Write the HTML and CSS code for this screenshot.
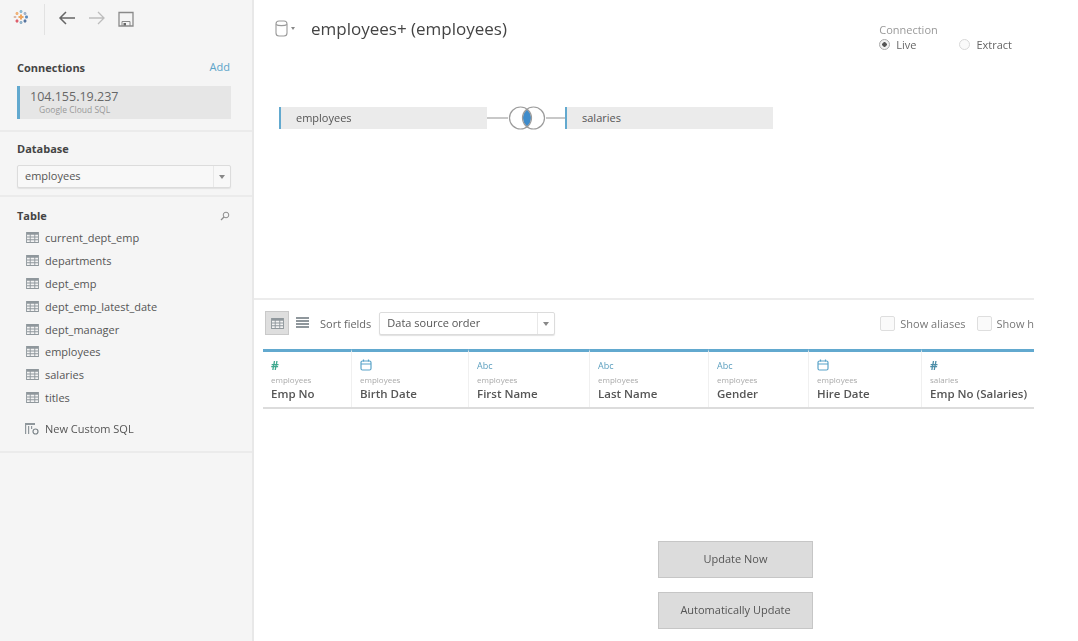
FILE: index.html
```html
<!DOCTYPE html>
<html lang="en">
<head>
  <meta charset="UTF-8" />
  <title>employees+ (employees)</title>
  <link rel="stylesheet" href="styles.css">
</head>
<body>
  <svg width="0" height="0" class="defs">
    <symbol id="table" viewBox="0 0 14 12">
      <path d="M0 0H14V12H0Z" fill="#8f979c"/>
      <path d="M1 3H4V5H1ZM5 3H9V5H5ZM10 3H13V5H10ZM1 6H4V8H1ZM5 6H9V8H5ZM10 6H13V8H10ZM1 9H4V11H1ZM5 9H9V11H5ZM10 9H13V11H10Z" fill="#f3f3f3"/>
    </symbol>
    <symbol id="calendar" viewBox="0 0 12 12">
      <rect x="1" y="2" width="10" height="9" rx="1.5" fill="none" stroke="currentColor" stroke-width="1.2"/>
      <path d="M1 5H11M3.500 .5V2.500M8.500 .5V2.500" stroke="currentColor" stroke-width="1.200"/>
    </symbol>
  </svg>

  <aside class="sidebar">
    <div class="topbar">
      <svg class="logo" width="16" height="16" viewBox="0 0 16 16">
        <path d="M7 1H9V4H7ZM6.500 1.800H9.500V3.200H6.500Z" fill="#8fbdd4"/>
        <path d="M3 3H5V6H3ZM2.500 3.800H5.500V5.200H2.500Z" fill="#f0b47c"/>
        <path d="M11 3H13V6H11ZM10.500 3.800H13.500V5.200H10.500Z" fill="#a3b5cc"/>
        <path d="M7 5.500H9V10.500H7ZM5.500 7H10.500V9H5.500Z" fill="#f0a65e"/>
        <path d="M1 7H3V9H1ZM0.500 7.500H3.500V8.500H0.500Z" fill="#d9b8a8"/>
        <path d="M12.500 6.500H14.500V9.500H12.500ZM12 7.300H15V8.700H12Z" fill="#5b8cbf"/>
        <path d="M3 10.500H5V13.500H3ZM2.500 11.300H5.500V12.700H2.500Z" fill="#de5f6b"/>
        <path d="M11 10.500H13V13.500H11ZM10.500 11.300H13.500V12.700H10.500Z" fill="#56749f"/>
        <path d="M7 12H9V15H7ZM6.500 12.800H9.500V14.200H6.500Z" fill="#94b5cb"/>
      </svg>
      <span class="topbar-sep"></span>
      <svg width="18" height="14" viewBox="0 0 18 14" class="nav-icon">
        <path d="M17 7H2M8 1L2 7L8 13" fill="none" stroke="#666" stroke-width="1.500"/>
      </svg>
      <svg width="18" height="14" viewBox="0 0 18 14" class="nav-icon">
        <path d="M1 7H16M10 1L16 7L10 13" fill="none" stroke="#bdbdbd" stroke-width="1.300"/>
      </svg>
      <svg width="16" height="16" viewBox="0 0 16 16" class="nav-icon">
        <path d="M1 1.500H15V15H1Z" fill="none" stroke="#8a8a8a" stroke-width="1.300"/>
        <path d="M4 15V10.500H12V15" fill="none" stroke="#8a8a8a"/>
        <rect x="5.500" y="12" width="2.500" height="2.500" fill="#666"/>
      </svg>
    </div>

    <section class="side-section connections">
      <div class="side-head">
        <h2>Connections</h2>
        <a class="add-link">Add</a>
      </div>
      <div class="conn-item">
        <div class="conn-ip">104.155.19.237</div>
        <div class="conn-type">Google Cloud SQL</div>
      </div>
    </section>

    <section class="side-section database">
      <h2>Database</h2>
      <div class="select db-select">
        <span class="select-value">employees</span>
        <span class="select-arrow"></span>
      </div>
    </section>

    <section class="side-section tables">
      <div class="side-head">
        <h2>Table</h2>
        <svg width="10" height="10" viewBox="0 0 10 10" class="search-icon">
          <circle cx="6" cy="4" r="2.800" fill="none" stroke="#8d8d8d"/>
          <path d="M4 6L1 9" stroke="#8d8d8d" stroke-width="1.200"/>
        </svg>
      </div>
      <ul class="table-list">
        <li><svg class="table-icon"><use href="#table"/></svg>current_dept_emp</li>
        <li><svg class="table-icon"><use href="#table"/></svg>departments</li>
        <li><svg class="table-icon"><use href="#table"/></svg>dept_emp</li>
        <li><svg class="table-icon"><use href="#table"/></svg>dept_emp_latest_date</li>
        <li><svg class="table-icon"><use href="#table"/></svg>dept_manager</li>
        <li><svg class="table-icon"><use href="#table"/></svg>employees</li>
        <li><svg class="table-icon"><use href="#table"/></svg>salaries</li>
        <li><svg class="table-icon"><use href="#table"/></svg>titles</li>
      </ul>
      <div class="custom-sql">
        <svg width="15" height="13" viewBox="0 0 15 13" class="sql-icon">
          <path d="M0 1H10V3H0ZM0 3H1.200V12H0ZM3 4H4.200V12H3ZM6 4H7.200V7H6Z" fill="#8f979c"/>
          <circle cx="10.500" cy="9.500" r="2.500" fill="none" stroke="#7b8489" stroke-width="1.200"/>
        </svg>
        New Custom SQL
      </div>
    </section>
  </aside>

  <main class="main">
    <div class="canvas">
      <header class="source-head">
        <svg width="13" height="17" viewBox="0 0 13 17" class="db-icon">
          <rect x="1" y="1" width="11" height="15" rx="3" fill="none" stroke="#9a9a9a" stroke-width="1.100"/>
          <path d="M1 4.500C3 6 10 6 12 4.500" fill="none" stroke="#9a9a9a" stroke-width="1.100"/>
        </svg>
        <span class="db-caret"></span>
        <h1>employees+ (employees)</h1>
        <div class="conn-mode">
          <div class="conn-mode-label">Connection</div>
          <div class="radios">
            <span class="radio-item"><span class="radio radio-on"></span>Live</span>
            <span class="radio-item"><span class="radio"></span>Extract</span>
          </div>
        </div>
      </header>
      <div class="join">
        <div class="join-table">employees</div>
        <div class="join-line"></div>
        <svg width="38" height="24" viewBox="0 0 38 24" class="join-icon">
          <path d="M19 3.500A11 11 0 0 1 19 20.500A11 11 0 0 1 19 3.500Z" fill="#3f8ccb"/>
          <circle cx="12.500" cy="12" r="11" fill="none" stroke="#9c9c9c" stroke-width="1.200"/>
          <circle cx="25.500" cy="12" r="11" fill="none" stroke="#9c9c9c" stroke-width="1.200"/>
        </svg>
        <div class="join-line join-line-short"></div>
        <div class="join-table">salaries</div>
      </div>
    </div>

    <div class="content">
      <div class="toolbar">
        <span class="view-btn view-btn-on">
          <svg width="13" height="11"><use href="#table"/></svg>
        </span>
        <svg width="13" height="12" viewBox="0 0 13 12" class="list-icon">
          <path d="M0 0H13V2H0ZM0 3H13V5H0ZM0 6H13V8H0ZM0 9H13V11H0Z" fill="#8f979c"/>
        </svg>
        <span class="sort-label">Sort fields</span>
        <div class="select sort-select">
          <span class="select-value">Data source order</span>
          <span class="select-arrow"></span>
        </div>
        <label class="check check-first"><span class="check-box"></span>Show aliases</label>
        <label class="check"><span class="check-box"></span>Show hidden fields</label>
      </div>

      <div class="fields">
        <div class="field field-1">
          <div class="type type-num-green">#</div>
          <div class="field-src">employees</div>
          <div class="field-name">Emp No</div>
        </div>
        <div class="field field-2">
          <div class="type type-date"><svg width="12" height="12"><use href="#calendar"/></svg></div>
          <div class="field-src">employees</div>
          <div class="field-name">Birth Date</div>
        </div>
        <div class="field field-3">
          <div class="type type-abc">Abc</div>
          <div class="field-src">employees</div>
          <div class="field-name">First Name</div>
        </div>
        <div class="field field-4">
          <div class="type type-abc">Abc</div>
          <div class="field-src">employees</div>
          <div class="field-name">Last Name</div>
        </div>
        <div class="field field-5">
          <div class="type type-abc">Abc</div>
          <div class="field-src">employees</div>
          <div class="field-name">Gender</div>
        </div>
        <div class="field field-6">
          <div class="type type-date"><svg width="12" height="12"><use href="#calendar"/></svg></div>
          <div class="field-src">employees</div>
          <div class="field-name">Hire Date</div>
        </div>
        <div class="field field-7">
          <div class="type type-num">#</div>
          <div class="field-src">salaries</div>
          <div class="field-name">Emp No (Salaries)</div>
        </div>
      </div>

      <div class="actions">
        <button class="update-btn">Update Now</button>
        <button class="update-btn">Automatically Update</button>
      </div>
    </div>
  </main>
</body>
</html>
```

FILE: styles.css
```css
* {
  box-sizing: border-box;
}

html, body {
  height: 100%;
}

body {
  margin: 0;
  display: flex;
  overflow: hidden;
  background: white;
  color: #555;
  font-family: 'Open Sans', 'Liberation Sans', sans-serif;
  font-size: 11px;
  filter: blur(0.4px);
}

.defs {
  display: none;
}

h1, h2 {
  margin: 0;
}

/* sidebar */
.sidebar {
  width: 254px;
  flex-shrink: 0;
  height: 641px;
  background: #f5f5f5;
  border-right: 2px solid #e8e8e8;
}

.topbar {
  height: 50px;
  display: flex;
  align-items: flex-start;
  padding: 4px 0 0 13px;
}

.logo {
  margin-top: 5px;
}

.topbar-sep {
  width: 1px;
  height: 31px;
  margin: 0 13px 0 15px;
  background: #e2e2e2;
}

.nav-icon {
  margin: 7px 12px 0 0;
}

.side-section {
  padding: 0 21px 0 17px;
  border-bottom: 2px solid #ebebeb;
}

.side-section h2 {
  font-size: 11px;
  line-height: 16px;
  font-weight: 700;
  color: #444;
}

.side-head {
  display: flex;
  justify-content: space-between;
  align-items: center;
}

.connections {
  height: 82px;
  padding-top: 10px;
}

.add-link {
  margin-right: 1px;
  padding-bottom: 2px;
  color: #5ba4c9;
  font-size: 11px;
  line-height: 14px;
}

.search-icon {
  margin-right: 1px;
}

.conn-item {
  margin-top: 10px;
  height: 33px;
  padding: 3px 0 0 10px;
  background: #e6e6e6;
  border-left: 3px solid #62a9cf;
}

.conn-ip {
  font-size: 12.500px;
  line-height: 15px;
  color: #666;
}

.conn-type {
  font-size: 8.500px;
  line-height: 11px;
  padding-left: 9px;
  color: #999;
}

.database {
  height: 65px;
  padding-top: 9px;
}

.select {
  display: flex;
  align-items: center;
  flex-shrink: 0;
  height: 23px;
  background: #f8f8f8;
  border: 1px solid #dcdcdc;
  border-radius: 2px;
  box-shadow: 0 1px 1px #e2e2e2;
}

.db-select {
  margin-top: 8px;
}

.select-value {
  flex: 1;
  padding: 0 0 2px 7px;
  color: #555;
  font-size: 11px;
}

.select-arrow {
  width: 17px;
  height: 100%;
  border-left: 1px solid #e8e8e8;
  position: relative;
}

.select-arrow::after {
  content: "";
  position: absolute;
  top: 9px;
  left: 5px;
  border: 3px solid transparent;
  border-top: 4px solid #888;
  border-bottom: 0;
}

.tables {
  height: 256px;
  padding-top: 11px;
}

.table-list {
  list-style: none;
  margin: 2px 0 0;
  padding: 0;
}

.table-list li {
  display: flex;
  align-items: center;
  height: 22.900px;
  padding-left: 9px;
  color: #555;
}

.table-icon {
  width: 13px;
  height: 11px;
  margin-right: 6px;
}

.custom-sql {
  display: flex;
  align-items: center;
  margin-top: 8px;
  height: 23px;
  padding-left: 8px;
  color: #555;
}

.sql-icon {
  margin-right: 5px;
}

/* main area */
.main {
  width: 780px;
  flex-shrink: 0;
  height: 641px;
  overflow: hidden;
  display: flex;
  flex-direction: column;
}

.canvas {
  height: 300px;
  flex-shrink: 0;
  border-bottom: 2px solid #ececec;
}

.source-head {
  display: flex;
  align-items: flex-start;
  height: 107px;
  padding: 18px 0 0 21px;
}

.db-icon {
  margin-top: 2px;
}

.db-caret {
  margin: 9px 16px 0 3px;
  border: 2px solid transparent;
  border-top: 3px solid #888;
  border-bottom: 0;
}

.source-head h1 {
  font-size: 17px;
  line-height: 21px;
  font-weight: 400;
  color: #444;
}

.conn-mode {
  margin-left: auto;
  margin-right: 22px;
  margin-top: 4px;
  font-size: 11px;
  line-height: 15px;
}

.conn-mode-label {
  color: #999;
}

.radios {
  display: flex;
  gap: 43px;
}

.radio-item {
  display: flex;
  align-items: center;
  color: #666;
}

.radio {
  width: 11px;
  height: 11px;
  margin-right: 6px;
  border: 1px solid #d8d8d8;
  border-radius: 50%;
  background: #fafafa;
}

.radio-on {
  border-color: #aaa;
  background: radial-gradient(circle, #555 0 2px, #f1f1f1 2.500px);
}

.join {
  display: flex;
  align-items: center;
  height: 22px;
  padding-left: 25px;
}

.join-table {
  width: 208px;
  height: 22px;
  padding-left: 15px;
  line-height: 22px;
  background: #ebebeb;
  border-left: 2px solid #62a9cf;
  color: #555;
}

.join-line {
  width: 21px;
  height: 2px;
  background: #c8c8c8;
}

.join-line-short {
  width: 19px;
}

.join-icon {
  flex-shrink: 0;
}

.content {
  padding-left: 9px;
}

.toolbar {
  height: 49px;
  display: flex;
  align-items: center;
  padding: 0 0 3px 2px;
  white-space: nowrap;
}

.toolbar > * {
  flex-shrink: 0;
}

.view-btn {
  display: flex;
  align-items: center;
  justify-content: center;
  width: 24px;
  height: 24px;
  background: #dedede;
  border: 1px solid #c9c9c9;
}

.list-icon {
  margin-left: 7px;
}

.sort-label {
  margin-left: 11px;
  color: #666;
}

.sort-select {
  width: 176px;
  margin-left: 8px;
  background: white;
}

.check {
  display: flex;
  align-items: center;
  color: #777;
  margin-left: 11px;
}

.check-first {
  margin-left: 325px;
}

.check-box {
  width: 15px;
  height: 15px;
  margin-right: 5px;
  background: #fafafa;
  border: 1px solid #dedede;
  border-radius: 2px;
}

.fields {
  display: flex;
  width: 771px;
  height: 60px;
  border-bottom: 2px solid #dcdcdc;
}

.field {
  height: 58px;
  padding: 7px 0 0 8px;
  border-top: 3px solid #62a9cf;
  border-right: 1px solid #f0f0f0;
  white-space: nowrap;
  overflow: hidden;
}

.field-1 { width: 89px; }
.field-2 { width: 117px; }
.field-3 { width: 121px; }
.field-4 { width: 119px; }
.field-5 { width: 100px; }
.field-6 { width: 113px; }
.field-7 { width: 112px; border-right: 0; }

.type {
  height: 14px;
  font-size: 9px;
  line-height: 13px;
}

.type svg {
  display: block;
}

.type-num-green {
  color: #3fa98f;
  font-size: 12px;
  font-weight: 700;
}

.type-num {
  color: #4d8ea8;
  font-size: 12px;
  font-weight: 700;
}

.type-date {
  color: #5ba4c9;
}

.type-abc {
  color: #5b9fbf;
}

.field-src {
  font-size: 8px;
  line-height: 10px;
  margin-top: 2px;
  color: #aaa;
}

.field-name {
  margin-top: 1px;
  font-size: 11.500px;
  line-height: 16px;
  font-weight: 600;
  color: #555;
}

.actions {
  display: flex;
  flex-direction: column;
  gap: 14px;
  width: 155px;
  margin: 132px 0 0 395px;
}

.update-btn {
  height: 37px;
  padding: 0 0 2px;
  background: #dcdcdc;
  border: 1px solid #c6c6c6;
  color: #555;
  font-family: inherit;
  font-size: 11px;
}
```
